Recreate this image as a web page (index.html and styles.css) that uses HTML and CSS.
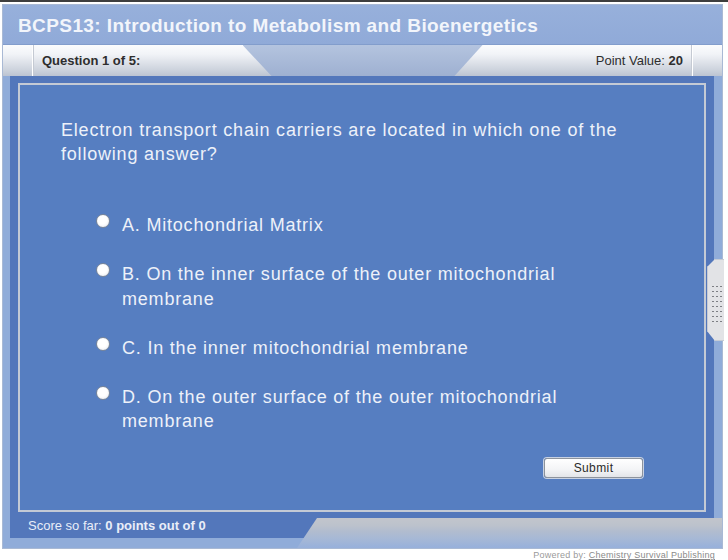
FILE: index.html
```html
<!DOCTYPE html>
<html lang="en">
<head>
  <meta charset="UTF-8" />
  <title>BCPS13 Quiz</title>
  <link rel="stylesheet" href="styles.css">
</head>
<body>
  <div class="topline"></div>
  <div class="player">
    <div class="title">BCPS13: Introduction to Metabolism and Bioenergetics</div>

    <div class="qbar">
      <div class="cap"></div>
      <div class="qlabel">Question 1 of 5:</div>
      <div class="qtab"></div>
      <div class="qvalue">Point Value: <b>20</b></div>
      <div class="cap"></div>
    </div>

    <div class="stage">
      <div class="panel">
        <p class="question">Electron transport chain carriers are located in which one of the following answer?</p>
        <ul class="options">
          <li><span class="radio"></span><span>A. Mitochondrial Matrix</span></li>
          <li><span class="radio"></span><span>B. On the inner surface of the outer mitochondrial membrane</span></li>
          <li><span class="radio"></span><span>C. In the inner mitochondrial membrane</span></li>
          <li><span class="radio"></span><span>D. On the outer surface of the outer mitochondrial membrane</span></li>
        </ul>
        <button class="submit">Submit</button>
      </div>
      <div class="score">Score so far: <b>0 points out of 0</b></div>
    </div>
    <div class="foottab"></div>

    <!-- side handle -->
    <div class="handle">
      <div class="dots"></div>
    </div>
  </div>
  <div class="powered">Powered by: <a href="#">Chemistry Survival Publishing</a></div>
</body>
</html>
```

FILE: styles.css
```css
body {
  margin: 0;
  background: #fff;
  font-family: "Liberation Sans", Arial, sans-serif;
}

.topline {
  height: 2px;
  background: #3e3e3e;
  margin-bottom: 2px;
}

.player {
  position: relative;
  width: 719px;
  margin-left: 2px;
  border: 1px solid #a9b9d4;
  background: #90acd9;
}

.title {
  height: 36px;
  line-height: 36px;
  padding: 3px 0 0 15px;
  border-bottom: 1px solid #829dcc;
  color: #f2f5fb;
  font-size: 19px;
  font-weight: bold;
  letter-spacing: 0.4px;
  background: linear-gradient(#97b0db, #90aad8);
}

.qbar {
  display: flex;
  height: 31px;
  background: linear-gradient(#fbfcfd 0%, #f1f3f7 30%, #dfe3ea 55%, #cdd3dd 80%, #bcc4d2 100%);
  font-size: 13px;
  color: #2e2e2e;
}

.cap {
  width: 30px;
  border-right: 1px solid #c5cad3;
  box-shadow: inset -1px 0 0 #fff;
}

.cap:last-child {
  border-right: none;
  border-left: 1px solid #c5cad3;
  box-shadow: inset 1px 0 0 #fff;
}

.qlabel, .qvalue {
  flex: 1;
  line-height: 31px;
}

.qlabel {
  padding-left: 8px;
  font-weight: bold;
}

.qvalue {
  text-align: right;
  padding-right: 8px;
}

.qtab {
  width: 240px;
  background: linear-gradient(#b4c4df, #a9bad8 50%, #9eb0d1);
  clip-path: polygon(0 0, 100% 0, 212px 100%, 29px 100%);
}

.stage {
  margin: 0 8px 0 7px;
  padding: 7px 8px 0 8px;
  background: #5377bb;
}

.panel {
  display: flex;
  flex-direction: column;
  height: 429px;
  box-sizing: border-box;
  border: 2px solid #c4cad5;
  background: #567ec1;
  color: #edf1f9;
}

.question {
  margin: 33px 50px 0 41px;
  font-size: 18px;
  line-height: 24px;
  letter-spacing: 0.8px;
}

.options {
  list-style: none;
  margin: 47px 100px 0 77px;
  padding: 0;
  font-size: 18px;
  line-height: 24.5px;
  letter-spacing: 0.8px;
}

.options li {
  display: flex;
  gap: 12px;
  margin-bottom: 24.5px;
}

.radio {
  flex: none;
  width: 12px;
  height: 12px;
  margin: 1px 0 0 -1px;
  border: 1px solid #7b879a;
  border-radius: 50%;
  background: radial-gradient(circle at 45% 40%, #fff 45%, #e4e6ea 100%);
}

.submit {
  align-self: flex-end;
  margin: auto 61px 32px 0;
  width: 99px;
  height: 21px;
  border: 1px solid #8d939c;
  border-radius: 3px;
  background: linear-gradient(#ffffff, #f3f4f6 60%, #e3e5e9);
  box-shadow: 0 0 0 1px #c9d2e2;
  font-family: "Liberation Sans", Arial, sans-serif;
  font-size: 12px;
  letter-spacing: 0.4px;
  color: #2a2a2a;
  padding: 0;
}

.score {
  height: 26px;
  line-height: 27px;
  padding-left: 10px;
  font-size: 13px;
  color: #e9eef8;
}

.foottab {
  position: relative;
  height: 30px;
  margin: -20px 0 0 294px;
  background: linear-gradient(#c2c5cc 0%, #bcc2cc 25%, #b1bccf 45%, #a6b8d6 70%, #97b0db 100%);
  clip-path: polygon(20px 0, 100% 0, 100% 100%, 0 100%);
}

.handle {
  position: absolute;
  top: 254px;
  right: -2px;
  width: 16px;
  height: 80px;
  background: #e2e3e6;
  border: 1px solid #c6cbd4;
  border-right: none;
  clip-path: polygon(8px 0, 100% 0, 100% 100%, 8px 100%, 0 72px, 0 8px);
}

.dots {
  margin: 24px 0 0 3px;
  width: 12px;
  height: 40px;
  background-image: radial-gradient(circle, #7d7f84 0.8px, transparent 1.1px);
  background-size: 4px 5px;
}

.powered {
  text-align: right;
  padding-right: 13px;
  margin-top: 1px;
  font-size: 9px;
  letter-spacing: 0.25px;
  color: #9a9a9a;
}

.powered a {
  color: #8a8a8a;
}
```
